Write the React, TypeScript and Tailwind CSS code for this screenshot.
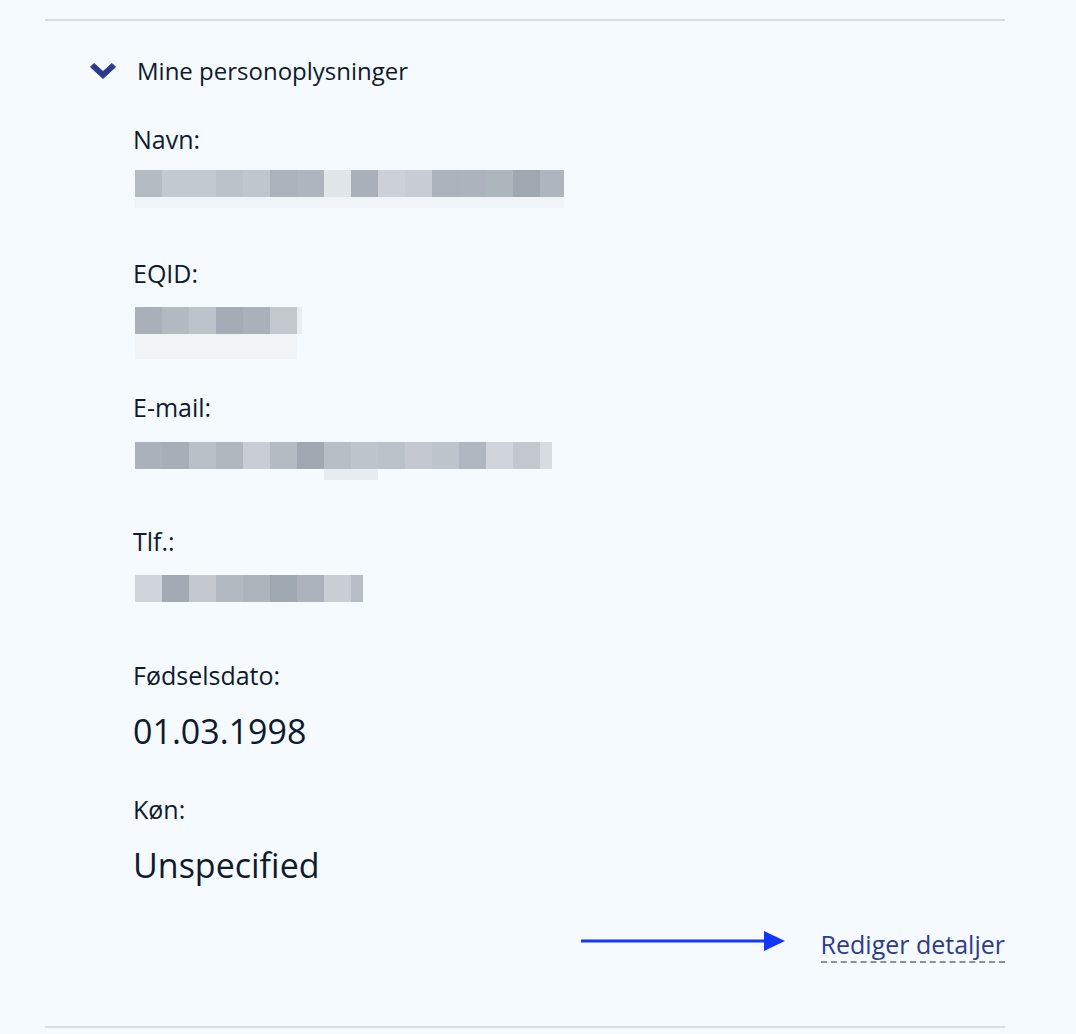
import React from 'react';

const font = { fontFamily: '"Open Sans", Lato, sans-serif' };

type Cell = string;

const navn: Cell[] = ['#b4bbc3', '#c3c9d0', '#c3c9d0', '#bcc2c9', '#c0c6cd', '#abb2bb', '#aeb5be', '#e1e6ea', '#a9b0b9', '#ccd1d8', '#c8cdd4', '#abb2bb', '#acb3bc', '#adb5bd', '#9fa7b0'];
const eqid: Cell[] = ['#a9b0b9', '#b3bac2', '#bdc3ca', '#a5acb6', '#aab1ba', '#c2c8ce'];
const email: Cell[] = ['#aab1ba', '#a7aeb7', '#bac0c7', '#b1b7bf', '#c9ced5', '#b5bbc3', '#a1a8b2', '#b8bec6', '#bfc5cc', '#bcc2c9', '#c3c9cf', '#bec4cb', '#b1b7c0', '#d0d5db', '#c3c8ce'];
const tlf: Cell[] = ['#d0d5db', '#a3aab3', '#c3c9cf', '#b3b9c1', '#adb4bc', '#9fa7b0', '#abb2bb', '#c9ced4'];

const Pixels = ({ cells, tail, tailW }: { cells: Cell[]; tail: string; tailW: number }) => {
  return <div className="flex h-[27px]">
      {cells.map((c, i) => <div key={i} className="w-[27px] h-full" style={{ backgroundColor: c }} />)}
      <div className="h-full" style={{ backgroundColor: tail, width: tailW }} />
    </div>;
};

const Field = ({ label, children }: { label: string; children: React.ReactNode }) => {
  return <div className="h-[134px]">
      <p className="text-[25px] leading-[28px] text-[#0f1b2d]">{label}</p>
      {children}
    </div>;
};

export default function App() {
  return <div className="min-h-[1034px] bg-[#f5faff] px-[45px] pt-[19px]" style={font}>
      <div className="w-[960px] border-t-2 border-b-2 border-[#d6dce2]">
        <div className="flex items-center h-[32px] mt-[34px] pl-[45px]">
          <svg width="26" height="16" viewBox="0 0 26 16" className="mr-[21px]">
            <path d="M0.5 4 L4 0.5 L13 8.5 L22 0.5 L25.5 4 L13 15.5 Z" fill="#2d3a8c" strokeLinejoin="round" stroke="#2d3a8c" strokeWidth="1" />
          </svg>
          <span className="text-[24px] text-[#0f1b2d]">Mine personoplysninger</span>
        </div>

        <div className="pl-[88px] mt-[38px]">
          <Field label="Navn:">
            <div className="mt-[17px] ml-[2px]">
              <Pixels cells={navn} tail="#aeb5be" tailW={24} />
              <div className="h-[11px] w-[429px] bg-[#f0f4f8]" />
            </div>
          </Field>
          <Field label="EQID:">
            <div className="mt-[20px] ml-[2px]">
              <Pixels cells={eqid} tail="#e9edf1" tailW={5} />
              <div className="h-[25px] w-[162px] bg-[#f1f4f7]" />
            </div>
          </Field>
          <Field label="E-mail:">
            <div className="mt-[21px] ml-[2px]">
              <Pixels cells={email} tail="#d7dce0" tailW={12} />
              <div className="h-[11px] w-[54px] ml-[189px] bg-[#e8ecf0]" />
            </div>
          </Field>
          <Field label="Tlf.:">
            <div className="mt-[20px] ml-[2px]">
              <Pixels cells={tlf} tail="#b7bdc4" tailW={12} />
            </div>
          </Field>
          <Field label="Fødselsdato:">
            <p className="mt-[22px] text-[34px] leading-[40px] text-[#0f1b2d]">01.03.1998</p>
          </Field>
          <Field label="Køn:">
            <p className="mt-[22px] text-[34px] leading-[40px] text-[#0f1b2d]">Unspecified</p>
          </Field>
        </div>

        <div className="flex items-center justify-end mt-[-3px] h-[40px]">
          <svg width="204" height="22" viewBox="0 0 204 22" className="mr-[36px] mt-[-10px]">
            <line x1="0" y1="11" x2="186" y2="11" stroke="#1434ff" strokeWidth="3" />
            <path d="M183 1 L204 11 L183 21 Z" fill="#1434ff" />
          </svg>
          <a className="text-[25px] leading-[30px] text-[#2e3c8a] border-b-2 border-dashed border-[#8a90a0] pb-[2px]">Rediger detaljer</a>
        </div>
        <div className="h-[60px]" />
      </div>
    </div>;
}
